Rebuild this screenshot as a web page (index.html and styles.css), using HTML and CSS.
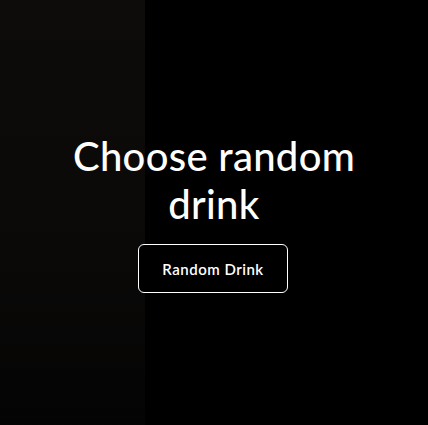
FILE: index.html
```html
<!DOCTYPE html>
<html lang="en">
<head>
<meta charset="utf-8">
<title>Random Drink</title>
<link rel="stylesheet" href="styles.css">
</head>
<body>
<main class="page">
  <section class="hero">
    <h1 class="hero-title">Choose random drink</h1>
    <button class="hero-button" type="button">Random Drink</button>
  </section>
</main>
</body>
</html>
```
FILE: styles.css
```css
* { box-sizing: border-box; }
html, body { margin: 0; padding: 0; height: 100%; }
body {
  background: #000;
  color: #fff;
  font-family: Lato, "Open Sans", sans-serif;
}
.page {
  min-height: 100vh;
  background:
    linear-gradient(to bottom, #0e0c0b 0%, #0a0908 60%, #050404 100%) left top / 145px 100% no-repeat,
    #000;
  display: flex;
  align-items: center;
  justify-content: center;
}
.hero {
  display: flex;
  flex-direction: column;
  align-items: center;
  gap: 16px;
  width: 300px;
}
.hero-title {
  margin: 0;
  font-size: 40px;
  font-weight: 500;
  line-height: 48px;
  text-align: center;
  letter-spacing: 0.3px;
}
.hero-button {
  width: 150px;
  height: 49px;
  margin-right: 2px;
  background: #000;
  color: #fff;
  border: 1px solid #fff;
  border-radius: 6px;
  font-family: inherit;
  font-size: 15px;
  font-weight: 600;
  letter-spacing: 0.5px;
}
```
